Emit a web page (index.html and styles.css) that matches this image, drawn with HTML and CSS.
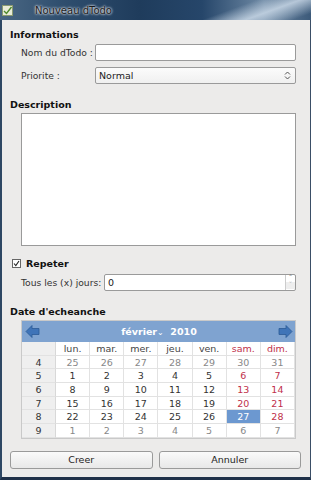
FILE: index.html
```html
<!DOCTYPE html>
<html lang="fr">
  <head>
    <meta charset="UTF-8" />
    <title>Nouveau dTodo</title>
    <link rel="stylesheet" href="styles.css">
  </head>
  <body>
    <div id="screen">
      <div id="titlebar">
        <svg class="app-icon" width="11" height="11" viewBox="0 0 11 11">
          <rect x="0.5" y="0.5" width="10" height="10" fill="#e9ecd8" stroke="#8a9a70" />
          <path d="M2 6 L4.5 8.5 L9.5 2" fill="none" stroke="#4f8a2a" stroke-width="1.4" />
        </svg>
        <span class="title">Nouveau dTodo</span>
      </div>
      <div id="window">
        <h2 class="section">Informations</h2>
        <div class="row">
          <label class="label">Nom du dTodo :</label>
          <div class="entry"></div>
        </div>
        <div class="row">
          <label class="label">Priorite :</label>
          <div class="entry combo">
            <span>Normal</span>
            <svg width="7" height="9" viewBox="0 0 7 9">
              <path d="M1 3.5 L3.5 1 L6 3.5 M1 5.5 L3.5 8 L6 5.5" fill="none" stroke="#555" stroke-width="1" />
            </svg>
          </div>
        </div>

        <h2 class="section desc-title">Description</h2>
        <div class="textarea"></div>

        <div class="check-row">
          <span class="checkbox">
            <svg width="9" height="9" viewBox="0 0 9 9">
              <rect x="0.5" y="0.5" width="8" height="8" fill="#fff" stroke="#666" />
              <path d="M2 4.5 L3.8 6.5 L7 2" fill="none" stroke="#222" stroke-width="1.1" />
            </svg>
          </span>
          <span class="check-label">Repeter</span>
        </div>
        <div class="row">
          <label class="label label-wide">Tous les (x) jours:</label>
          <div class="entry spin">
            <span>0</span>
            <div class="spin-btns">
              <span class="spin-up">˄</span>
              <span class="spin-down">˅</span>
            </div>
          </div>
        </div>

        <h2 class="section date-title">Date d'echeanche</h2>
        <div class="calendar">
          <div class="cal-head">
            <svg class="arrow" width="15" height="15" viewBox="0 0 15 15">
              <path d="M1 7.5 L7 1.5 L7 4.5 L14 4.5 L14 10.5 L7 10.5 L7 13.5 Z" fill="#3f74b8" stroke="#2c5a96" stroke-width="0.8" />
            </svg>
            <span class="month">février<small>⌄</small>&nbsp;&nbsp;2010</span>
            <svg class="arrow" width="15" height="15" viewBox="0 0 15 15">
              <path d="M14 7.5 L8 1.5 L8 4.5 L1 4.5 L1 10.5 L8 10.5 L8 13.5 Z" fill="#3f74b8" stroke="#2c5a96" stroke-width="0.8" />
            </svg>
          </div>
          <div class="cal-grid">
            <span class="wk"></span><span class="dn">lun.</span><span class="dn">mar.</span><span class="dn">mer.</span><span class="dn">jeu.</span><span class="dn">ven.</span><span class="dn we">sam.</span><span class="dn we">dim.</span>
            <span class="wk">4</span><span class="d out">25</span><span class="d out">26</span><span class="d out">27</span><span class="d out">28</span><span class="d out">29</span><span class="d out">30</span><span class="d out">31</span>
            <span class="wk">5</span><span class="d">1</span><span class="d">2</span><span class="d">3</span><span class="d">4</span><span class="d">5</span><span class="d we">6</span><span class="d we">7</span>
            <span class="wk">6</span><span class="d">8</span><span class="d">9</span><span class="d">10</span><span class="d">11</span><span class="d">12</span><span class="d we">13</span><span class="d we">14</span>
            <span class="wk">7</span><span class="d">15</span><span class="d">16</span><span class="d">17</span><span class="d">18</span><span class="d">19</span><span class="d we">20</span><span class="d we">21</span>
            <span class="wk">8</span><span class="d">22</span><span class="d">23</span><span class="d">24</span><span class="d">25</span><span class="d">26</span><span class="d sel">27</span><span class="d we">28</span>
            <span class="wk">9</span><span class="d out">1</span><span class="d out">2</span><span class="d out">3</span><span class="d out">4</span><span class="d out">5</span><span class="d out">6</span><span class="d out">7</span>
          </div>
        </div>

        <div class="buttons">
          <button class="btn">Creer</button>
          <button class="btn">Annuler</button>
        </div>
      </div>
    </div>
  </body>
</html>
```

FILE: styles.css
```css
html,
body {
  margin: 0;
  height: 100%;
}
body {
  background-color: #1d3550;
  font-family: "DejaVu Sans", sans-serif;
  font-size: 9.5px;
  color: #222;
}
#screen {
  width: 311px;
  height: 480px;
  display: flex;
  flex-direction: column;
}

/* barre de titre */
#titlebar {
  height: 20px;
  flex: none;
  display: flex;
  align-items: center;
  gap: 22px;
  padding-left: 2px;
  background:
    linear-gradient(160deg, transparent 70%, rgba(200, 215, 230, 0.85) 82%, transparent 95%),
    linear-gradient(90deg, #4a6783 0%, #2f4e6e 20%, #1f3c5c 45%, #26466a 65%, #6f8aa5 85%, #3c5a7a 100%);
}
.title {
  color: #1a1a1a;
  font-size: 10px;
  text-shadow: 0 0 3px #fff, 0 0 2px #fff;
}

#window {
  flex: 1;
  background: #ecebea;
  border-left: 2px solid #2e4763;
  border-right: 1px solid #3a4e66;
  border-bottom: 3px solid #1f3048;
  padding: 9px 8px 0 8px;
  display: flex;
  flex-direction: column;
}

.section {
  margin: 0 0 4px 0;
  font-size: 9.5px;
  font-weight: bold;
  color: #111;
}
.desc-title {
  margin-top: 9px;
  margin-bottom: 3px;
}
.date-title {
  margin-top: 9px;
  margin-bottom: 3px;
}

.row {
  display: flex;
  align-items: center;
  padding-left: 11px;
  margin-bottom: 6px;
}
.label {
  flex: none;
  width: 74px;
  white-space: nowrap;
  color: #333;
  font-size: 9.2px;
}
.label-wide {
  width: 83px;
}
.entry {
  flex: 1;
  height: 15px;
  margin-right: 6px;
  background: #fff;
  border: 1px solid #9a9a9a;
  border-radius: 2px;
  display: flex;
  align-items: center;
  padding-left: 3px;
  color: #222;
}
.combo {
  height: 15px;
  justify-content: space-between;
  padding-right: 4px;
  background: linear-gradient(#fbfbfb, #f0f0f0);
}
.spin {
  justify-content: space-between;
}
.spin-btns {
  display: flex;
  flex-direction: column;
  width: 9px;
  height: 15px;
  border-left: 1px solid #ccc;
  font-size: 7px;
  line-height: 7px;
  text-align: center;
  color: #666;
}
.spin-down {
  color: #bbb;
  background: #eee;
}

.textarea {
  height: 131px;
  margin: 0 6px 12px 11px;
  background: #fff;
  border: 1px solid #9a9a9a;
}

.check-row {
  display: flex;
  align-items: center;
  gap: 5px;
  margin-left: 2px;
  margin-bottom: 5px;
}
.checkbox {
  display: flex;
}
.check-label {
  font-weight: bold;
  color: #111;
}

/* calendrier */
.calendar {
  margin: 0 6px 0 11px;
  border: 1px solid #c9c9c9;
}
.cal-head {
  height: 21px;
  background: #7fa3d0;
  display: flex;
  align-items: center;
  justify-content: space-between;
  padding: 0 2px 0 3px;
}
.month {
  color: #fff;
  font-weight: bold;
  font-size: 9.5px;
}
.month small {
  font-size: 8px;
  font-weight: normal;
}
.cal-grid {
  display: grid;
  grid-template-columns: 34px repeat(7, 1fr);
  grid-auto-rows: 13.7px;
  background: #fff;
}
.cal-grid span {
  display: flex;
  align-items: center;
  justify-content: center;
  border-right: 1px solid #e2e2e2;
  border-bottom: 1px solid #e2e2e2;
  color: #333;
}
.cal-grid .wk {
  background: #efefef;
  border-right-color: #d8d8d8;
}
.cal-grid .dn {
  color: #444;
}
.cal-grid .out {
  color: #888;
}
.cal-grid .we {
  color: #c0304a;
}
.cal-grid .sel {
  background: #6c98d0;
  color: #fff;
}

.buttons {
  display: flex;
  gap: 6px;
  margin-top: 12px;
  margin-right: 1px;
}
.btn {
  flex: 1;
  height: 18px;
  font-family: "DejaVu Sans", sans-serif;
  font-size: 9.5px;
  color: #222;
  background: linear-gradient(#fafafa, #e8e8e8);
  border: 1px solid #9a9a9a;
  border-radius: 3px;
  padding: 0;
}
```
